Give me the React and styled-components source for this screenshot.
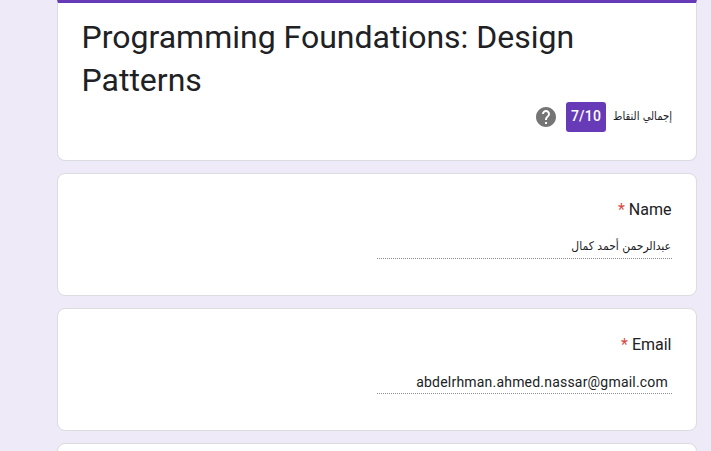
import React from "react";
import styled, { createGlobalStyle } from "styled-components";

const Global = createGlobalStyle`
  * { box-sizing: border-box; }
  html, body { margin: 0; height: 100%; overflow: hidden; }
  body { background: #eeeaf8; font-family: Roboto, "Noto Sans", sans-serif; color: #202124; }
`;

const Page = styled.main`
  width: 711px;
  height: 451px;
  padding-left: 57px;
  overflow: hidden;
  background: #eeeaf8;
`;

const Column = styled.div`
  width: 640px;
  display: flex;
  flex-direction: column;
  gap: 12px;
`;

const Card = styled.section`
  height: 123px;
  flex: none;
  padding: 24px 24px 0;
  background: #fff;
  border: 1px solid #dadce0;
  border-radius: 8px;
`;

const HeaderCard = styled(Card)`
  height: 161px;
  padding: 13px 24px 0;
  border-top: 3px solid #673ab7;
  border-radius: 0 0 8px 8px;
`;

const Title = styled.h1`
  margin: 0 0 0 -0.5px;
  font-size: 32px;
  font-weight: 400;
  line-height: 43px;
`;

const ScoreRow = styled.div`
  display: flex;
  align-items: center;
  direction: rtl;
  height: 30px;
`;

const arabicFont = '"DejaVu Sans Condensed", "DejaVu Sans", sans-serif';

const ScoreLabel = styled.span`
  width: 59px;
  white-space: nowrap;
  font-family: ${arabicFont};
  font-stretch: semi-condensed;
  font-size: 11.2px;
  line-height: 26px;
`;

const Badge = styled.span`
  width: 40px;
  height: 30px;
  margin: 0 7px 0 8px;
  border-radius: 3px;
  background: #673ab7;
  color: #fff;
  font-size: 14px;
  font-weight: 500;
  letter-spacing: 0.2px;
  line-height: 29px;
  text-align: center;
  direction: ltr;
`;

const HelpIcon = styled.svg`
  width: 24px;
  height: 24px;
  fill: #757575;
`;

const Label = styled.div`
  padding-right: 0.5px;
  font-size: 16px;
  line-height: 24px;
  text-align: right;
`;

const Required = styled.span`
  color: #d94a40;
`;

const Answer = styled.div`
  width: 295px;
  height: 25px;
  margin: 12px 0 0 auto;
  padding-right: 4px;
  border-bottom: 1px dotted #8c8c8c;
  font-size: 14px;
  letter-spacing: 0.2px;
  line-height: 27px;
  text-align: right;
`;

const ArabicAnswer = styled(Answer)`
  padding-right: 1px;
  font-family: ${arabicFont};
  font-stretch: semi-condensed;
  font-size: 12px;
  letter-spacing: 0;
  line-height: 25px;
  direction: rtl;
`;

function Question({ label, children }) {
  return (
    <Card>
      <Label><Required>*</Required> {label}</Label>
      {children}
    </Card>
  );
}

export default function App() {
  return (
    <Page>
      <Global />
      <Column>
        <HeaderCard>
          <Title>Programming Foundations: Design Patterns</Title>
          <ScoreRow>
            <ScoreLabel>إجمالي النقاط</ScoreLabel>
            <Badge>7/10</Badge>
            <HelpIcon viewBox="0 0 24 24">
              <path d="M12 2C6.48 2 2 6.48 2 12s4.48 10 10 10 10-4.48 10-10S17.52 2 12 2zm1 17h-2v-2h2v2zm2.07-7.75l-.9.92C13.45 12.9 13 13.5 13 15h-2v-.5c0-1.1.45-2.1 1.17-2.83l1.24-1.26c.37-.36.59-.86.59-1.41 0-1.1-.9-2-2-2s-2 .9-2 2H8c0-2.21 1.79-4 4-4s4 1.79 4 4c0 .88-.36 1.68-.93 2.25z" />
            </HelpIcon>
          </ScoreRow>
        </HeaderCard>
        <Question label="Name">
          <ArabicAnswer>عبدالرحمن أحمد كمال</ArabicAnswer>
        </Question>
        <Question label="Email">
          <Answer>abdelrhman.ahmed.nassar@gmail.com</Answer>
        </Question>
        <Card />
      </Column>
    </Page>
  );
}
